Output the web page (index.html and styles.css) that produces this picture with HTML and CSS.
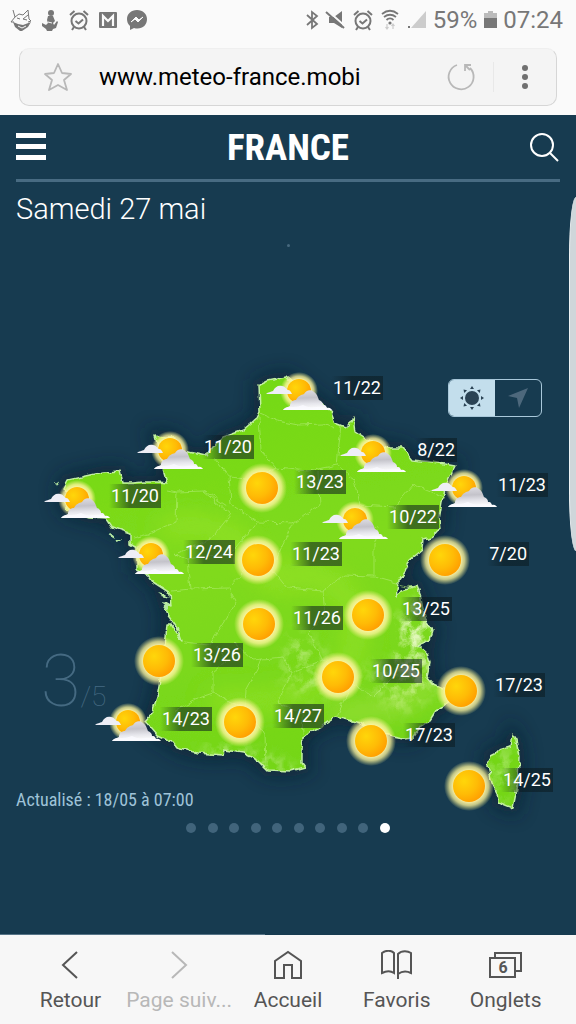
FILE: index.html
```html
<!DOCTYPE html>
<html lang="fr">
<head>
<meta charset="utf-8">
<meta name="viewport" content="width=device-width, initial-scale=1">
<title>Météo-France</title>
<link rel="stylesheet" href="styles.css">
</head>
<body>
<svg class="defs" aria-hidden="true">
  <defs>
    <radialGradient id="glow">
      <stop offset="0.6" stop-color="#fff6a8"/>
      <stop offset="0.78" stop-color="#fdf59a" stop-opacity="0.75"/>
      <stop offset="1" stop-color="#f4f08a" stop-opacity="0"/>
    </radialGradient>
    <radialGradient id="disc" cx="0.35" cy="0.35" r="0.75">
      <stop offset="0" stop-color="#ffd60a"/>
      <stop offset="0.55" stop-color="#ffbb06"/>
      <stop offset="1" stop-color="#ff9a00"/>
    </radialGradient>
    <linearGradient id="cloud" x1="0.3" y1="0" x2="0.4" y2="1">
      <stop offset="0" stop-color="#dddce2"/>
      <stop offset="0.4" stop-color="#c4c3ca"/>
      <stop offset="0.7" stop-color="#e6e6ec"/>
      <stop offset="1" stop-color="#ffffff"/>
    </linearGradient>
    <symbol id="sun" viewBox="-36 -26 72 52">
      <circle r="25" fill="url(#glow)"/>
      <circle r="16" fill="url(#disc)"/>
    </symbol>
    <symbol id="sun-cloud" viewBox="-36 -26 72 52">
      <circle cy="-3" r="19" fill="url(#glow)"/>
      <circle cy="-3" r="12" fill="url(#disc)"/>
      <path d="M-33 0c2-2 5-2 7-3c2-4 5-6 9-5c3 0 4 3 6 4c2 0 3 2 4 4z" fill="#eeeef6"/>
      <path d="M-16 16c2-3 5-3 7-4c0-4 3-6 6-6c2-4 5-5 8-6c2-4 7-5 10-2c4 3 4 6 5 8c3 1 4 3 4 5c4 0 3 2 4 3c3-1 4 1 5 2z" fill="url(#cloud)"/>
      <path d="M-16 16c2-2 5-3 8-3c6 0 9-1 12-2c4 2 9 3 13 2c6-1 11 0 16 3z" fill="#fafaff" opacity="0.800"/>
    </symbol>
    <symbol id="alarm" viewBox="0 0 22 22">
      <g fill="none" stroke="currentColor" stroke-width="2">
        <circle cx="11" cy="12" r="7.5"/>
        <path d="M7.500 12l3 2.500 4.500-4M2 6l4.500-4M20 6l-4.500-4M6 18l-2 3M16 18l2 3"/>
      </g>
    </symbol>
  </defs>
</svg>

<header class="browser">
  <div class="status">
    <div class="status-group notices">
      <svg class="icon" viewBox="0 0 22 22"><g fill="none" stroke="currentColor" stroke-width="1"><path d="M3 1l2 7 4-3 4 1 5-5 1 9 2 2-3 1M5 8l-4 5 3 0M7 9l3 1M18 6l-5 4 4 1"/></g><path d="M3 13l5 2 5 1 8-3-3 5-6 4h-2l-5-4z" fill="currentColor"/><path d="M8 17l4 2 4-2" stroke="#fafafa" fill="none"/></svg>
      <svg class="icon" viewBox="0 0 22 22"><circle cx="12" cy="4" r="3" fill="currentColor"/><path d="M9 7l5 0 2 5-2 2 1 2 3-4 1 1-2 6-3 1-1 2H8l-1-2-4-3 0-3 4 2 2-2-1-3z" fill="currentColor"/><path d="M9 13l4 1" stroke="#fafafa"/></svg>
      <svg class="icon"><use href="#alarm"/></svg>
      <svg class="icon" viewBox="0 0 22 22"><rect x="2" y="3" width="18" height="16" rx="1" fill="currentColor"/><path d="M6 17V7l5 5 5-5v10" fill="none" stroke="#fafafa" stroke-width="2.200"/></svg>
      <svg class="icon" viewBox="0 0 22 22"><path d="M11 1C5 1 1 5 1 10c0 3 1 5 3 7v4l4-2c7 2 13-2 13-9c0-5-4-9-10-9z" fill="currentColor"/><path d="M5 13l5-5 3 3 4-3-5 5-3-3z" fill="#fafafa" stroke="#fafafa"/></svg>
    </div>
    <div class="status-group">
      <svg class="icon icon-narrow" viewBox="0 0 16 22"><path d="M3 6l10 9-5 4V3l5 4-10 9" fill="none" stroke="currentColor" stroke-width="1.800"/></svg>
      <svg class="icon" viewBox="0 0 22 22"><path d="M4 8h5l8-6v17l-8-5H4z" fill="currentColor"/><path d="M3 2l18 16" stroke="#fafafa" stroke-width="2"/><path d="M1 3l18 16" stroke="currentColor" stroke-width="2"/></svg>
      <svg class="icon"><use href="#alarm"/></svg>
      <svg class="icon" viewBox="0 0 22 22"><g fill="none" stroke="currentColor" stroke-width="1.800"><path d="M3 5c5-4 11-4 16 0M5 8c4-3 8-3 12 0M7.500 11c2-2 5-2 7 0"/></g><circle cx="11" cy="14" r="1.600" fill="currentColor"/><path d="M8 15v5M6.500 18l1.500 2 1.500-2M14 20v-5M12.500 17l1.500-2 1.500 2" fill="none" stroke="#ccc" stroke-width="1.200"/></svg>
      <svg class="icon" viewBox="0 0 22 22"><path d="M20 2v17H5z" fill="#ccc"/><path d="M2 17h2v2H2z" fill="currentColor"/></svg>
      <span>59%</span>
      <svg class="icon icon-narrow" viewBox="0 0 16 22"><path d="M2 4h4V2h5v2h4v6H2z" fill="#bbb"/><path d="M2 9h13v10H2z" fill="currentColor"/></svg>
      <span>07:24</span>
    </div>
  </div>
  <div class="address">
    <button class="address-button" aria-label="Ajouter aux favoris">
      <svg class="address-icon" viewBox="0 0 30 30"><path d="M15 2l4 9 9 1-7 6 3 10-9-5-9 5 3-10-7-6 9-1z" fill="none" stroke="#b8b8b8" stroke-width="1.800" stroke-linejoin="round"/></svg>
    </button>
    <input class="address-input" type="text" value="www.meteo-france.mobi" aria-label="Adresse">
    <button class="address-button reload" aria-label="Actualiser">
      <svg class="address-icon" viewBox="0 0 30 30"><path d="M11 3A12.500 12.500 0 1 0 24 6M19 9V3h6M19 3l5 5" fill="none" stroke="#b8b8b8" stroke-width="1.800"/></svg>
    </button>
    <button class="address-button" aria-label="Menu du navigateur">
      <svg class="address-icon" viewBox="0 0 30 30" fill="#707070"><circle cx="15" cy="6" r="3"/><circle cx="15" cy="15" r="3"/><circle cx="15" cy="24" r="3"/></svg>
    </button>
  </div>
</header>

<main class="page">
  <div class="topbar">
    <button class="top-button" aria-label="Menu"><svg class="top-icon" viewBox="0 0 30 30" fill="#fff"><path d="M0 1h30v5H0zM0 12h30v5H0zM0 23h30v5H0z"/></svg></button>
    <h1 class="title">FRANCE</h1>
    <button class="top-button" aria-label="Rechercher"><svg class="top-icon" viewBox="0 0 30 30" fill="none" stroke="#fff" stroke-width="2"><circle cx="12" cy="13" r="11"/><path d="M20 21l8 8"/></svg></button>
  </div>
  <h2 class="date">Samedi 27 mai</h2>
  <span class="marker"></span>

  <section class="map" aria-label="Carte des prévisions">
    <svg class="land" viewBox="0 366 576 420">
      <defs>
        <filter id="rough" x="-5%" y="-5%" width="110%" height="110%">
          <feTurbulence type="fractalNoise" baseFrequency="0.120" numOctaves="2" seed="4"/>
          <feDisplacementMap in="SourceGraphic" scale="6" xChannelSelector="R" yChannelSelector="G"/>
        </filter>
        <filter id="shade" x="-10%" y="-10%" width="120%" height="120%"><feGaussianBlur stdDeviation="9"/></filter>
        <filter id="soft" x="-50%" y="-50%" width="200%" height="200%"><feGaussianBlur stdDeviation="12"/></filter>
        <filter id="relief" x="-20%" y="-20%" width="140%" height="140%">
          <feTurbulence type="fractalNoise" baseFrequency="0.090" numOctaves="4" seed="9"/>
          <feColorMatrix values="0 0 0 0 0.80  0 0 0 0 0.95  0 0 0 0 0.55  3 0 0 0 -1.200" result="n"/>
          <feGaussianBlur in="SourceAlpha" stdDeviation="8" result="b"/>
          <feComposite in="n" in2="b" operator="in"/>
        </filter>
        <linearGradient id="green" x1="0" y1="0" x2="0.200" y2="1">
          <stop offset="0" stop-color="#72d914"/>
          <stop offset="0.500" stop-color="#80da1c"/>
          <stop offset="1" stop-color="#74d618"/>
        </linearGradient>
        <path id="coast" d="M259 385L267 381 287 377 300 388 315 400 330 410 335 423 345 427 351 423 353 416 355 432 367 440 387 448 402 448 412 460 433 462 455 466 447 482 442 502 439 520 440 528 433 536 423 539 422 550 410 560 405 572 398 582 396 598 402 590 417 586 421 597 423 610 427 623 433 630 430 640 418 645 427 653 430 663 427 677 432 683 443 688 462 692 443 707 435 712 430 720 420 727 413 737 403 738 393 736 375 732 360 723 348 720 335 717 323 725 313 730 303 738 302 750 302 763 305 767 290 771 267 770 257 760 243 753 223 750 222 755 197 753 177 747 173 742 157 735 145 721 152 713 157 697 160 680 165 647 167 625 172 625 182 641 177 627 167 613 164 603 171 607 170 593 153 582 148 575 137 568 137 547 130 543 130 533 112 527 106 518 90 517 67 510 63 500 70 496 63 488 67 480 90 475 103 472 120 471 123 483 133 483 143 482 157 482 167 483 163 470 160 453 155 435 163 437 175 437 180 450 193 453 207 456 213 447 223 437 243 430 257 418 260 412ZM512 734L516 740 519 757 518 783 513 808 498 802 497 793 492 783 488 767 490 755 500 750 510 747Z"/>
        <clipPath id="inside"><use href="#coast"/></clipPath>
      </defs>
      <use href="#coast" fill="#0b2032" stroke="#0b2032" stroke-width="12" opacity="0.700" filter="url(#shade)"/>
      <g filter="url(#rough)">
        <use href="#coast" fill="url(#green)" stroke="#c2efa2" stroke-width="1.500" stroke-linejoin="round"/>
        <path d="M108 535l5-1 2 5zM115 539l6 0-4 4zM157 592l8 2 4 4-7-2zM162 602l6 3 0 6-5-5zM55 482l4 1-2 3z" fill="#b5e8a2"/>
        <g clip-path="url(#inside)">
          <g filter="url(#soft)" opacity="0.450" fill="none" stroke="#b2ee39" stroke-width="18">
            <path d="M270 585c35-20 80-5 85 30s-5 60-35 72-70 20-110 12M160 530c60-20 90 20 110 50"/>
          </g>
          <path d="M400 620l18-20 12 15-5 70-25 0z" fill="#fff" filter="url(#relief)"/>
          <path d="M360 670l60-20 15 40-40 25z" fill="#fff" filter="url(#relief)" opacity="0.500"/>
          <path d="M195 752l40-4 60 20-5 10-60-8z" fill="#fff" filter="url(#relief)" opacity="0.700"/>
          <path d="M290 630l25 10 25 40-25 20-35-20zM490 750h25v50h-25z" fill="#fff" filter="url(#relief)" opacity="0.400"/>
          <path d="M440 680l-45 25-65 12" stroke="#c5ee64" stroke-width="16" fill="none" filter="url(#soft)" opacity="0.500"/>
        </g>
        <g fill="none" stroke="#b3ec74" stroke-width="1" opacity="0.600">
          <path d="M260 413l18 8 20 4 25-1 12 5M259 416l2 35 15 17 32 3 29-6 4-40M276 468l-22 12-25-3-15-19M229 477l2 27 26 18 38 1 25-18-2-34M337 465l18 15 5 25-11 18M360 505l35 2 18-22 33 13M167 490l10 2 27-1 23 15M177 492l-1 30-27 12-17 4M204 492l27 22-20 25-37 16M174 554l13 5 3 30-18 2M187 559l45-6 25-31M190 589l39-1 15-16 27-4 22-45M229 589l7 14-27 42-25-3M271 568l16 20 36 3 21-16 30 1 0-32 6-17-31-4M323 591l2 25-16 17 14 28-31 12-9-16-30 3-19-18M216 645l10 17-13 11 0 20-18 6-21 12M213 693l32 15 20 27 1 31M262 659l-16 30-1 18M292 673l-15 30 25 10 1 22M323 661l29 23-15 32M352 684l22 13 23-23 18-20M374 577l29 8 15 3"/>
        </g>
      </g>
    </svg>

    <ul class="pins">
      <li class="pin" style="--x:299;--y:394"><svg class="weather"><use href="#sun-cloud"/></svg><span class="temp">11/22</span></li>
      <li class="pin" style="--x:170;--y:453"><svg class="weather"><use href="#sun-cloud"/></svg><span class="temp">11/20</span></li>
      <li class="pin" style="--x:373;--y:456"><svg class="weather"><use href="#sun-cloud"/></svg><span class="temp">8/22</span></li>
      <li class="pin" style="--x:262;--y:488"><svg class="weather"><use href="#sun"/></svg><span class="temp">13/23</span></li>
      <li class="pin" style="--x:464;--y:491"><svg class="weather"><use href="#sun-cloud"/></svg><span class="temp">11/23</span></li>
      <li class="pin" style="--x:77;--y:502"><svg class="weather"><use href="#sun-cloud"/></svg><span class="temp">11/20</span></li>
      <li class="pin" style="--x:355;--y:523"><svg class="weather"><use href="#sun-cloud"/></svg><span class="temp">10/22</span></li>
      <li class="pin" style="--x:151;--y:558"><svg class="weather"><use href="#sun-cloud"/></svg><span class="temp">12/24</span></li>
      <li class="pin" style="--x:258;--y:560"><svg class="weather"><use href="#sun"/></svg><span class="temp">11/23</span></li>
      <li class="pin" style="--x:445;--y:560"><svg class="weather"><use href="#sun"/></svg><span class="temp">7/20</span></li>
      <li class="pin" style="--x:368;--y:615"><svg class="weather"><use href="#sun"/></svg><span class="temp">13/25</span></li>
      <li class="pin" style="--x:259;--y:624"><svg class="weather"><use href="#sun"/></svg><span class="temp">11/26</span></li>
      <li class="pin" style="--x:159;--y:661"><svg class="weather"><use href="#sun"/></svg><span class="temp">13/26</span></li>
      <li class="pin" style="--x:338;--y:677"><svg class="weather"><use href="#sun"/></svg><span class="temp">10/25</span></li>
      <li class="pin" style="--x:461;--y:691"><svg class="weather"><use href="#sun"/></svg><span class="temp">17/23</span></li>
      <li class="pin" style="--x:128;--y:725"><svg class="weather"><use href="#sun-cloud"/></svg><span class="temp">14/23</span></li>
      <li class="pin" style="--x:240;--y:722"><svg class="weather"><use href="#sun"/></svg><span class="temp">14/27</span></li>
      <li class="pin" style="--x:371;--y:741"><svg class="weather"><use href="#sun"/></svg><span class="temp">17/23</span></li>
      <li class="pin" style="--x:469;--y:786"><svg class="weather"><use href="#sun"/></svg><span class="temp">14/25</span></li>
    </ul>

    <div class="toggle">
      <button class="toggle-button toggle-on" aria-label="Temps" aria-pressed="true">
        <svg class="toggle-icon" viewBox="-12 -12 24 24" fill="#2b4354"><circle r="7"/><path id="ray" d="M-2-9h4L0-12z"/><use href="#ray" transform="rotate(45)"/><use href="#ray" transform="rotate(90)"/><use href="#ray" transform="rotate(135)"/><use href="#ray" transform="rotate(180)"/><use href="#ray" transform="rotate(225)"/><use href="#ray" transform="rotate(270)"/><use href="#ray" transform="rotate(315)"/></svg>
      </button>
      <button class="toggle-button" aria-label="Vent" aria-pressed="false">
        <svg class="toggle-icon" viewBox="0 0 24 24"><path d="M22 2L13 22l-2-10-9-2z" fill="#4d687c"/></svg>
      </button>
    </div>
    <p class="confidence"><span class="confidence-value">3</span>/5</p>
  </section>

  <p class="updated">Actualisé : 18/05 à 07:00</p>
  <div class="dots">
    <span class="dot"></span><span class="dot"></span><span class="dot"></span><span class="dot"></span><span class="dot"></span><span class="dot"></span><span class="dot"></span><span class="dot"></span><span class="dot"></span><span class="dot dot-on"></span>
  </div>
  <div class="loading"></div>
</main>
<div class="edge-handle"></div>

<nav class="toolbar">
  <button class="tool"><svg class="tool-icon" viewBox="0 0 34 30"><path d="M24 2L10 15l14 13"/></svg><span class="tool-label">Retour</span></button>
  <button class="tool tool-off"><svg class="tool-icon" viewBox="0 0 34 30"><path d="M10 2l14 13-14 13"/></svg><span class="tool-label">Page suiv...</span></button>
  <button class="tool"><svg class="tool-icon" viewBox="0 0 34 30"><path d="M4 28V11L17 2l13 9v17h-9V15h-8v13z"/></svg><span class="tool-label">Accueil</span></button>
  <button class="tool"><svg class="tool-icon" viewBox="0 0 34 30"><path d="M18 29V4c4-4 10-3 13-1v20c-4-2-9-2-13 1M14 23c-3-2-8-2-12 0V3c4-3 9-3 12 0z"/></svg><span class="tool-label">Favoris</span></button>
  <button class="tool"><svg class="tool-icon" viewBox="0 0 34 30"><path d="M1 8h25v19H1zM6 8V3h26v18h-6"/><text class="tab-count" x="14" y="23">6</text></svg><span class="tool-label">Onglets</span></button>
</nav>
</body>
</html>
```
FILE: styles.css
```css
* { box-sizing: border-box; }

body {
  margin: 0;
  min-height: 100vh;
  display: flex;
  flex-direction: column;
  position: relative;
  overflow-x: hidden;
  background: #173b50;
  font-family: Roboto, "Liberation Sans", sans-serif;
}

button {
  padding: 0;
  border: 0;
  background: none;
  color: inherit;
  font: inherit;
}

h1, h2, p, ul { margin: 0; padding: 0; }

svg { display: block; }

.defs { position: absolute; width: 0; height: 0; }

/* Browser chrome */
.browser {
  padding: 0 19px 9px;
  background: #fafafa;
}

.status {
  display: flex;
  justify-content: space-between;
  align-items: center;
  height: 40px;
  margin: 0 -6px 8px -9px;
  color: #777;
  font-size: 24px;
}

.status-group {
  display: flex;
  align-items: center;
  gap: 5px;
}

.notices { gap: 7px; }

.icon { width: 22px; height: 22px; }
.icon-narrow { width: 16px; }

.address {
  display: flex;
  align-items: center;
  height: 58px;
  padding: 0 16px 0 23px;
  border: 1px solid #d6d6d6;
  border-top-color: #efefef;
  border-radius: 10px;
  background: #f4f4f4;
}

.address-button { flex: none; }
.address-icon { width: 30px; height: 30px; }

.reload {
  padding-right: 17px;
  margin-right: 16px;
  border-right: 1px solid #e8e8e8;
}

.address-input {
  flex: 1;
  min-width: 0;
  padding: 0 0 0 26px;
  border: 0;
  background: none;
  color: #000;
  font: 24px Roboto, "Liberation Sans", sans-serif;
}

/* Forecast page */
.page {
  flex: 1;
  display: flex;
  flex-direction: column;
  color: #fff;
}

.topbar {
  display: flex;
  justify-content: space-between;
  align-items: center;
  height: 67px;
  margin: 0 16px;
  border-bottom: 3px solid #486b82;
}

.top-icon { width: 30px; height: 30px; }

.title {
  font: bold 37px "Roboto Condensed", "Liberation Sans Narrow", Roboto, sans-serif;
}

.date {
  margin: 9px 16px 0;
  font-size: 29px;
  font-weight: 300;
  line-height: 36px;
}

.marker {
  align-self: center;
  width: 3px;
  height: 3px;
  margin-top: 17px;
  border-radius: 50%;
  background: #47697e;
}

.map {
  position: relative;
  aspect-ratio: 576 / 420;
  margin-top: 119px;
}

.land {
  width: 100%;
  height: 100%;
  overflow: visible;
}

.pins { list-style: none; }

.pin {
  position: absolute;
  left: calc(var(--x) / 576 * 100%);
  top: calc((var(--y) - 366) / 420 * 100%);
}

.weather {
  position: absolute;
  left: -36px;
  top: -26px;
  width: 72px;
  height: 52px;
}

.temp {
  position: absolute;
  right: -84px;
  top: -18px;
  padding: 0 2px;
  background: linear-gradient(90deg, rgba(10, 25, 30, 0), rgba(10, 25, 30, 0.55) 40%);
  font-size: 18px;
  line-height: 24px;
}

.toggle {
  position: absolute;
  right: 34px;
  top: 13px;
  display: flex;
  width: 94px;
  height: 38px;
  overflow: hidden;
  border: 1px solid #a9c8da;
  border-radius: 6px;
}

.toggle-button {
  flex: 1;
  display: grid;
  place-items: center;
}

.toggle-on { background: #c3deec; }
.toggle-icon { width: 24px; height: 24px; }

.confidence {
  position: absolute;
  left: 41px;
  bottom: 53px;
  color: #456a82;
  font-size: 28px;
  font-weight: 100;
  line-height: 72px;
}

.confidence-value { font-size: 72px; }

.updated {
  margin: 0 16px;
  color: #9fc3d8;
  font: 18px "Roboto Condensed", "Liberation Sans Narrow", Roboto, sans-serif;
  line-height: 28px;
}

.dots {
  display: flex;
  justify-content: space-between;
  align-self: center;
  width: 204px;
  margin-top: 9px;
}

.dot {
  width: 10px;
  height: 10px;
  border-radius: 50%;
  background: #41647b;
}

.dot-on { background: #fff; }

.loading {
  width: 46%;
  height: 1px;
  margin-top: auto;
  background: #567487;
}

.edge-handle {
  position: absolute;
  right: 0;
  top: 197px;
  width: 7px;
  height: 354px;
  border-left: 1px solid #eef2f4;
  border-radius: 7px 0 0 7px / 60px 0 0 60px;
  background: #cfd6da;
}

/* Bottom toolbar */
.toolbar {
  display: grid;
  grid-template-columns: repeat(5, minmax(0, 1fr));
  padding: 15px 16px 11px;
  background: #f7f7f7;
  color: #555;
}

.tool {
  display: flex;
  flex-direction: column;
  align-items: center;
  gap: 7px;
}

.tool-off { color: #b8b8b8; }

.tool-icon {
  width: 34px;
  height: 30px;
  fill: none;
  stroke: currentColor;
  stroke-width: 2;
}

.tool-label {
  white-space: nowrap;
  font-size: 21px;
  line-height: 26px;
}

.tab-count {
  fill: currentColor;
  stroke: none;
  font-size: 16px;
  font-weight: bold;
  text-anchor: middle;
}
```
